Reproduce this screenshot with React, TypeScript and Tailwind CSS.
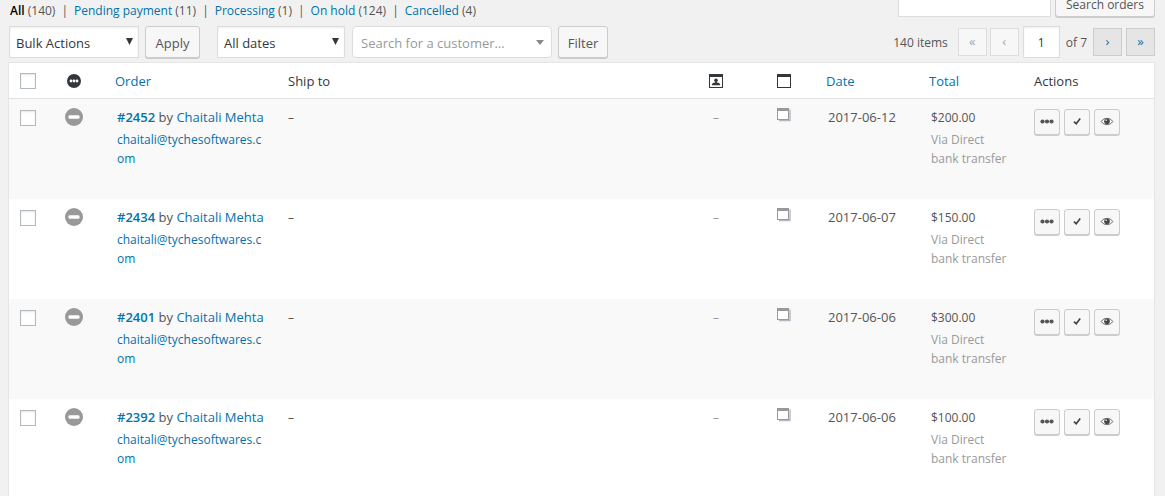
import React from 'react';

interface Order {
  id: string;
  customer: string;
  email: string;
  date: string;
  total: string;
}

const orders: Order[] = [
  { id: '#2452', customer: 'Chaitali Mehta', email: 'chaitali@tychesoftwares.com', date: '2017-06-12', total: '$200.00' },
  { id: '#2434', customer: 'Chaitali Mehta', email: 'chaitali@tychesoftwares.com', date: '2017-06-07', total: '$150.00' },
  { id: '#2401', customer: 'Chaitali Mehta', email: 'chaitali@tychesoftwares.com', date: '2017-06-06', total: '$300.00' },
  { id: '#2392', customer: 'Chaitali Mehta', email: 'chaitali@tychesoftwares.com', date: '2017-06-06', total: '$100.00' },
];

const statuses = [
  { label: 'Pending payment', count: 11 },
  { label: 'Processing', count: 1 },
  { label: 'On hold', count: 124 },
  { label: 'Cancelled', count: 4 },
];

const StatusIcon = () => (
  <svg className="mx-auto block" width="14" height="14" viewBox="0 0 14 14">
    <circle cx="7" cy="7" r="7" fill="#32373c" />
    <circle cx="4" cy="7" r="1.4" fill="#fff" />
    <circle cx="7" cy="7" r="1.4" fill="#fff" />
    <circle cx="10" cy="7" r="1.4" fill="#fff" />
  </svg>
);

const OnHoldIcon = () => (
  <svg className="mx-auto block" width="18" height="18" viewBox="0 0 18 18" role="img" aria-label="On hold">
    <circle cx="9" cy="9" r="9" fill="#999" />
    <rect x="3.5" y="7.2" width="11" height="3.6" rx="1.2" fill="#fff" />
  </svg>
);

const MessageIcon = () => (
  <svg className="mx-auto block" width="14" height="14" viewBox="0 0 14 14">
    <rect x="0.5" y="0.5" width="13" height="13" fill="#fff" stroke="#32373c" />
    <rect width="14" height="3" fill="#32373c" />
    <circle cx="7" cy="6.2" r="1.8" fill="#32373c" />
    <path d="M6.2 7h1.6v1.600c1.800.2 3.200.7 3.200 2.100v.6H3v-.6c0-1.400 1.400-1.900 3.200-2.100z" fill="#32373c" />
  </svg>
);

const NotesIcon = () => (
  <svg className="mx-auto block" width="14" height="14" viewBox="0 0 14 14">
    <rect x="0.5" y="0.5" width="13" height="13" fill="#fff" stroke="#32373c" />
    <rect width="14" height="3" fill="#32373c" />
  </svg>
);

const NoteStackIcon = () => (
  <svg className="mx-auto block" width="14" height="14" viewBox="0 0 14 14">
    <path d="M13 1.5V12.5H2" fill="none" stroke="#b4b8c4" strokeWidth="1.4" />
    <rect x="0.5" y="0.5" width="11" height="11" fill="#fff" stroke="#999" />
    <rect width="12" height="3" fill="#999" />
  </svg>
);

const DotsIcon = () => (
  <svg width="14" height="14" viewBox="0 0 14 14" fill="#555">
    <circle cx="2.5" cy="6.5" r="2.1" />
    <circle cx="7" cy="6.5" r="2.1" />
    <circle cx="11.5" cy="6.5" r="2.1" />
  </svg>
);

const CheckIcon = () => (
  <svg width="14" height="14" viewBox="0 0 14 14" fill="none" stroke="#444" strokeWidth="1.7">
    <path d="M4 6.6l2.200 2.200 4-5.200" />
  </svg>
);

const EyeIcon = () => (
  <svg width="14" height="14" viewBox="0 0 14 14">
    <path d="M1.2 6.500C4 2.300 10 2.300 12.800 6.500 10 10.700 4 10.700 1.200 6.500z" fill="none" stroke="#666" />
    <circle cx="7" cy="6.3" r="2.8" fill="#444" />
    <circle cx="6.2" cy="5.2" r="0.9" fill="#ccc" />
  </svg>
);

interface DropdownProps {
  label: string;
  className: string;
  arrow: string;
  muted?: boolean;
}

const Dropdown: React.FC<DropdownProps> = ({ label, className, arrow, muted }) => (
  <div className={`relative ${className}`}>
    <select
      aria-label={label}
      className={`block h-8 w-full appearance-none border border-[#ddd] bg-white pt-0.5 text-[13px] outline-none ${muted ? 'rounded pl-2 text-[#999]' : 'pl-1.5 text-[#32373c] shadow-[inset_0_1px_2px_rgba(0,0,0,0.07)]'}`}
    >
      <option>{label}</option>
    </select>
    <svg className={`pointer-events-none absolute ${arrow}`} viewBox="0 0 8 6" preserveAspectRatio="none">
      <path d="M0 0h8L4 6z" fill="currentColor" />
    </svg>
  </div>
);

const buttonStyle = 'rounded-[3px] border border-[#ccc] bg-[#f7f7f7] text-[#555] shadow-[0_1px_0_#ccc]';
const actionStyle = 'flex h-[26px] w-[26px] items-center justify-center';
const checkboxStyle = 'block h-4 w-4 appearance-none border border-[#b4b9be] bg-white shadow-[inset_0_1px_2px_rgba(0,0,0,0.1)]';

const OrderRow: React.FC<{ order: Order }> = ({ order }) => (
  <tr className="h-[100px] align-top odd:bg-[#f9f9f9]">
    <td className="pt-[11px] pl-[11px]">
      <input type="checkbox" aria-label={`Select order ${order.id}`} className={checkboxStyle} />
    </td>
    <td className="pt-[9px]">
      <OnHoldIcon />
    </td>
    <td className="pt-[9px] pr-3 pl-[18px]">
      <div className="text-[13px] leading-[19px] whitespace-nowrap">
        <a href="#" className="font-semibold text-[#0073aa]">{order.id}</a> by{' '}
        <a href="#" className="text-[#0073aa]">{order.customer}</a>
      </div>
      <a href="#" className="mt-[3px] block break-all text-[#0073aa]">{order.email}</a>
    </td>
    <td className="pt-[9px] pl-2">–</td>
    <td className="pt-[9px] text-center text-[#999]">–</td>
    <td className="pt-[9px]">
      <NoteStackIcon />
    </td>
    <td className="pt-[9px] pl-2.5 text-[13px] leading-[19px]">{order.date}</td>
    <td className="pt-[9px] pl-2.5">
      <div>{order.total}</div>
      <div className="mt-[3px] pr-4 text-[#999]">Via Direct bank transfer</div>
    </td>
    <td className="pt-2.5 pl-2">
      <div className="flex gap-1">
        <button aria-label="Processing" className={`${actionStyle} ${buttonStyle}`}><DotsIcon /></button>
        <button aria-label="Complete" className={`${actionStyle} ${buttonStyle}`}><CheckIcon /></button>
        <button aria-label="View" className={`${actionStyle} ${buttonStyle}`}><EyeIcon /></button>
      </div>
    </td>
  </tr>
);

const App = () => {
  return (
    <div className="h-screen overflow-hidden bg-[#f1f1f1] pr-2.5 pl-2 font-['Open_Sans',sans-serif] text-[12px] leading-[19px] text-[#555]">
      <div className="flex h-[17px] justify-between pl-0.5">
        <ul className="flex pt-px">
          <li>
            <a href="#" className="font-semibold text-black">All</a> (140)
          </li>
          {statuses.map((status) => (
            <li key={status.label}>
              <span className="mx-1.5">|</span>
              <a href="#" className="text-[#0073aa]">{status.label}</a> ({status.count})
            </li>
          ))}
        </ul>
        <form className="flex items-end gap-1">
          <input type="search" aria-label="Search orders" className="h-7 w-[153px] border border-[#ddd] bg-white" />
          <button type="button" className={`h-7 w-[100px] pt-0.5 ${buttonStyle}`}>Search orders</button>
        </form>
      </div>

      <div className="flex items-center justify-between pt-[9px] pb-1 pl-px">
        <div className="flex">
          <Dropdown label="Bulk Actions" className="w-[130px] text-[#32373c]" arrow="top-3 right-1.5 h-[7px] w-[7px]" />
          <button className={`ml-1.5 h-8 w-[55px] pt-0.5 text-[13px] ${buttonStyle}`}>Apply</button>
          <Dropdown label="All dates" className="ml-[17px] w-32 text-[#32373c]" arrow="top-3 right-1.5 h-[7px] w-[7px]" />
          <Dropdown label="Search for a customer…" className="ml-[7px] w-[200px] text-[#888]" arrow="top-3.5 right-2 h-[5px] w-2" muted />
          <button className={`ml-1.5 h-8 w-[50px] pt-0.5 text-[13px] ${buttonStyle}`}>Filter</button>
        </div>
        <div className="flex items-center">
          <span className="mr-2.5">140 items</span>
          <button disabled className="mr-[3px] h-7 w-[29px] border border-[#ddd] bg-[#f7f7f7] pb-0.5 text-[13px] text-[#a0a5aa]">«</button>
          <button disabled className="mr-1 h-7 w-[29px] border border-[#ddd] bg-[#f7f7f7] pb-0.5 text-[13px] text-[#a0a5aa]">‹</button>
          <input type="text" aria-label="Current page" defaultValue="1" className="h-8 w-[37px] border border-[#ddd] bg-white text-center text-[#32373c] shadow-[inset_0_1px_2px_rgba(0,0,0,0.07)]" />
          <span className="mx-1.5">of 7</span>
          <a href="#" className="mr-1 flex h-7 w-[29px] items-center justify-center border border-[#ccc] bg-[#e5e5e5] pb-0.5 text-[13px] text-[#0073aa]">›</a>
          <a href="#" className="flex h-7 w-[29px] items-center justify-center border border-[#ccc] bg-[#e5e5e5] pb-0.5 text-[13px] text-[#0073aa]">»</a>
        </div>
      </div>

      <div className="border border-[#e5e5e5] bg-white">
        <table className="w-full table-fixed border-separate border-spacing-0 text-left">
          <thead>
            <tr className="h-9 text-[13px] text-[#32373c] [&>th]:border-b [&>th]:border-[#e1e1e1]">
              <th className="w-10 pl-[11px]">
                <input type="checkbox" aria-label="Select all orders" className={checkboxStyle} />
              </th>
              <th className="w-[50px]" aria-label="Status"><StatusIcon /></th>
              <th className="w-[181px] pt-0.5 pl-4 font-normal"><a href="#" className="text-[#0073aa]">Order</a></th>
              <th className="pt-0.5 pl-2 font-normal">Ship to</th>
              <th className="w-[68px]" aria-label="Customer message"><MessageIcon /></th>
              <th className="w-[68px]" aria-label="Order notes"><NotesIcon /></th>
              <th className="w-[103px] pt-0.5 pl-2 font-normal"><a href="#" className="text-[#0073aa]">Date</a></th>
              <th className="w-[105px] pt-0.5 pl-2 font-normal"><a href="#" className="text-[#0073aa]">Total</a></th>
              <th className="w-32 pt-0.5 pl-2 font-normal">Actions</th>
            </tr>
          </thead>
          <tbody>
            {orders.map((order) => (
              <OrderRow key={order.id} order={order} />
            ))}
          </tbody>
        </table>
      </div>
    </div>
  );
};

export default App;
